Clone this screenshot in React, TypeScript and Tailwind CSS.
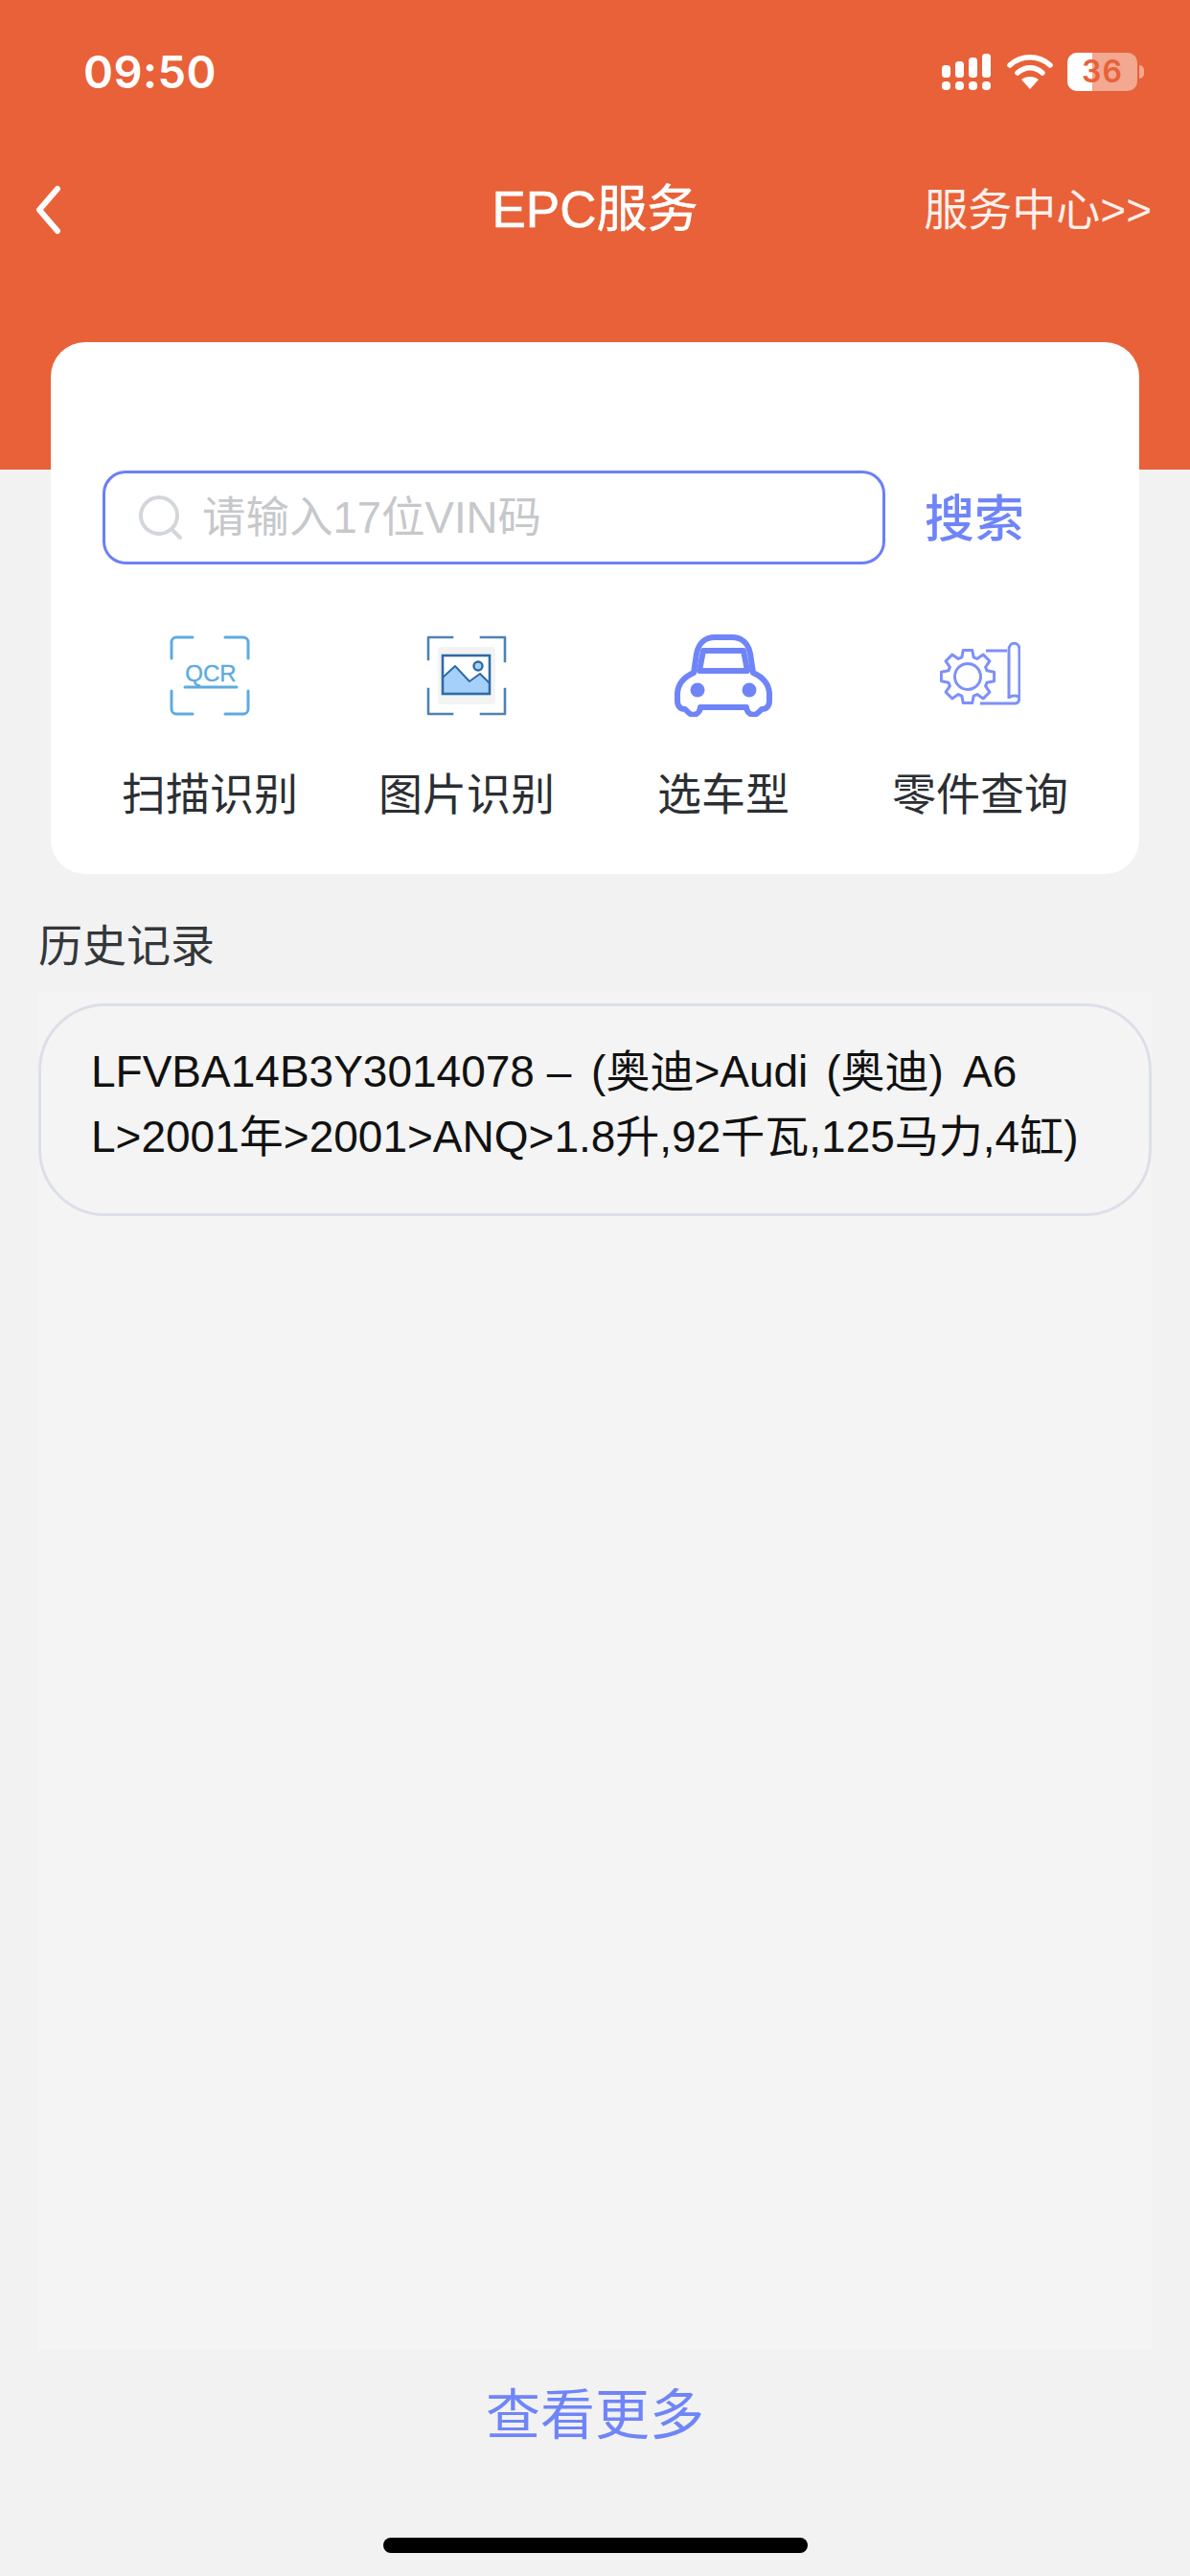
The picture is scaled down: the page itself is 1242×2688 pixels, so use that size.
import React from "react";

const FONT = "font-['Liberation_Sans','Noto_Sans_CJK_SC',sans-serif]";

const SignalIcon = () => (
  <svg width="54" height="38" viewBox="0 0 54 38" fill="#fff">
    <rect x="1" y="12" width="9" height="13" rx="3.5" />
    <rect x="15" y="8" width="9" height="17" rx="3.5" />
    <rect x="29" y="4" width="9" height="21" rx="3.5" />
    <rect x="43" y="0" width="9" height="25" rx="3.5" />
    <rect x="1" y="29" width="9" height="9" rx="4" />
    <rect x="15" y="29" width="9" height="9" rx="4" />
    <rect x="29" y="29" width="9" height="9" rx="4" />
    <rect x="43" y="29" width="9" height="9" rx="4" />
  </svg>
);

const WifiIcon = () => (
  <svg width="48" height="38" viewBox="0 0 48 38" fill="none" stroke="#fff" strokeWidth="5.5" strokeLinecap="round">
    <path d="M3 12C15 1 33 1 45 12" />
    <path d="M11 20C19 13 29 13 37 20" />
    <path d="M24 37l-9-10c5-4 13-4 18 0z" fill="#fff" stroke="none" />
  </svg>
);

const Battery = () => (
  <div className="relative flex items-center">
    <div className="relative w-[73px] h-[40px] rounded-[10px] bg-white/45 overflow-hidden">
      <div className="h-full w-[26px] bg-white" />
      <span className="absolute inset-0 flex items-center justify-center font-['Inter'] text-[32px] font-semibold text-[#e86138] tracking-[1px]">
        36
      </span>
    </div>
    <div className="w-[5px] h-[14px] ml-[2px] rounded-r-full bg-white/45" />
  </div>
);

const QcrIcon = () => (
  <svg width="84" height="84" viewBox="0 0 84 84" fill="none" stroke="#5eabe0" strokeWidth="3" strokeLinecap="round" strokeLinejoin="round">
    <path d="M2 24V7a5 5 0 0 1 5-5h17" />
    <path d="M58 2h19a5 5 0 0 1 5 5v17" />
    <path d="M2 58v19a5 5 0 0 0 5 5h17" />
    <path d="M58 82h19a5 5 0 0 0 5-5V58" />
    <path d="M16 54h54" />
    <text x="43" y="48" textAnchor="middle" fontSize="24" fontFamily="Liberation Sans" fill="#5eabe0" stroke="#5eabe0" strokeWidth="0.4">
      QCR
    </text>
  </svg>
);

const PictureIcon = () => (
  <svg width="84" height="84" viewBox="0 0 84 84" fill="none" strokeLinecap="square">
    <rect x="12" y="12" width="60" height="60" rx="3" fill="#f3f3f3" />
    <g stroke="#4f82b3" strokeWidth="2.6" strokeLinejoin="round">
      <path d="M2 25V2h25" />
      <path d="M57 2h25v25" />
      <path d="M2 56v26h25" />
      <path d="M57 82h25V56" />
    </g>
    <rect x="17" y="21" width="49" height="40" fill="#fff" />
    <path d="M17 44l13-12 15 16 11-8 10 10v11H17z" fill="#a5d0fa" stroke="#2f6ba5" strokeWidth="2" strokeLinejoin="round" />
    <rect x="17" y="21" width="49" height="40" stroke="#2f6ba5" strokeWidth="2.6" />
    <circle cx="54" cy="32" r="4.5" stroke="#2f6ba5" strokeWidth="2.4" fill="#a5d0fa" />
  </svg>
);

const CarIcon = () => (
  <svg width="102" height="86" viewBox="0 0 102 86" fill="none" stroke="#6f85f7" strokeWidth="6" strokeLinejoin="round">
    <path d="M20 40l3-20C25 9 32 3 42 3h18c10 0 17 6 19 17l3 20c9 4 16 10 17 21v8c0 6-3 9-8 9l-3 3c-5 5-12 3-13-5H27c-1 8-8 10-13 5l-3-3c-5 0-8-3-8-9v-8c1-11 8-17 17-21z" />
    <path d="M26 38l4-21h42l4 21z" />
    <circle cx="24" cy="58" r="7.5" fill="#6f85f7" stroke="none" />
    <circle cx="78" cy="58" r="7.5" fill="#6f85f7" stroke="none" />
  </svg>
);

// 齿轮外轮廓: 8 个齿
const gearPath = (cx: number, cy: number, ro: number, ri: number) => {
  const pts: string[] = [];
  for (let i = 0; i < 8; i++) {
    const a = (i * Math.PI) / 4 - Math.PI / 2;
    const p = (r: number, d: number) =>
      `${(cx + r * Math.cos(a + d)).toFixed(1)} ${(cy + r * Math.sin(a + d)).toFixed(1)}`;
    pts.push(p(ri, -0.3), p(ro, -0.17), p(ro, 0.17), p(ri, 0.3));
  }
  return `M${pts.join("L")}Z`;
};

const GearIcon = () => (
  <svg width="84" height="70" viewBox="0 0 84 70" fill="none" stroke="#7d90f8" strokeWidth="3" strokeLinejoin="round">
    <path d="M48 9h22" />
    <path d="M72 59V8c0-9 11-9 11 0v48c0 3 0 8-4 8H42" />
    <path d="M72 59c1-4 11-4 11 0" />
    <path d={gearPath(29, 36, 28, 21)} fill="#fff" />
    <circle cx="29" cy="36" r="13.5" fill="#fff" />
  </svg>
);

const tools = [
  { label: "扫描识别", icon: <QcrIcon /> },
  { label: "图片识别", icon: <PictureIcon /> },
  { label: "选车型", icon: <CarIcon /> },
  { label: "零件查询", icon: <GearIcon /> },
];

export default function App() {
  return (
    <div className={`${FONT} w-[1242px] h-[2688px] flex flex-col bg-[#f2f2f2] overflow-hidden`}>
      {/* 顶部橙色区域 */}
      <div className="h-[490px] shrink-0 bg-[#e86138] text-white">
        <div className="flex items-center justify-between pl-[87px] pr-[48px] pt-[50px] h-[100px]">
          <span className="font-['Inter'] text-[47px] leading-[50px] font-semibold tracking-[0.5px]">09:50</span>
          <div className="flex items-center gap-[15px]">
            <SignalIcon />
            <WifiIcon />
            <Battery />
          </div>
        </div>
        <div className="grid grid-cols-[1fr_auto_1fr] items-center mt-[84px] px-[40px] h-[70px]">
          <svg width="30" height="52" viewBox="0 0 30 52" fill="none" stroke="#fff" strokeWidth="6" strokeLinecap="round" strokeLinejoin="round" className="-ml-[5px]">
            <path d="M25 4L6 26l19 22" />
          </svg>
          <span className="text-[53px] leading-[70px] [-webkit-text-stroke:0.6px_#fff]">EPC服务</span>
          <span className="justify-self-end text-[46px] leading-[70px] text-white/90">服务中心&gt;&gt;</span>
        </div>
      </div>

      {/* 搜索卡片 */}
      <div className="mx-[53px] -mt-[133px] h-[555px] shrink-0 bg-white rounded-[36px] pt-[134px] pl-[54px]">
        <div className="flex items-center">
          <div className="w-[817px] h-[98px] rounded-[24px] border-[3px] border-[#6b80f6] flex items-center pl-[34px]">
            <svg width="48" height="48" viewBox="0 0 48 48" fill="none" stroke="#d3d6da" strokeWidth="4" strokeLinecap="round">
              <circle cx="22" cy="22" r="19" />
              <path d="M36 37l8 8" />
            </svg>
            <span className="ml-[19px] pt-[2px] text-[45.5px] leading-[60px] text-[#c6c8cb]">请输入17位VIN码</span>
          </div>
          <span className="ml-[41px] pt-[4px] text-[52px] leading-[60px] font-medium text-[#6f85f7]">搜索</span>
        </div>
        <div className="grid grid-cols-4 w-[1072px] -ml-[22px] mt-0">
          {tools.map((t) => (
            <div key={t.label} className="flex flex-col items-center">
              <div className="h-[112px] mt-[60px] flex items-center justify-center">{t.icon}</div>
              <span className="mt-[38px] text-[46px] leading-[60px] text-[#2b2f33]">{t.label}</span>
            </div>
          ))}
        </div>
      </div>

      {/* 历史记录 */}
      <div className="mt-[45px] mx-[40px] flex-1 flex flex-col">
        <div className="text-[46px] leading-[60px] text-[#33373a]">历史记录</div>
        <div className="h-[1417px] bg-[#f4f4f4] mt-[18px] pt-[12px]">
          <div className="h-[222px] rounded-[70px] border-[3px] border-[#dcdfe8] px-[52px] pt-[34px] text-[46px] leading-[68px] text-[#111111]">
            LFVBA14B3Y3014078 – <span className="ml-[8px]">(</span>奥迪&gt;Audi <span className="ml-[6px]">(</span>奥迪<span className="mr-[10px]">)</span> A6 L&gt;2001年&gt;2001&gt;ANQ&gt;1.8升,92千瓦,125马力,4缸)
          </div>
        </div>
        <div className="mt-[33px] text-center text-[57px] leading-[70px] text-[#6f85f7]">查看更多</div>
        <div className="mt-[93px] mx-auto w-[443px] h-[16px] rounded-full bg-black" />
      </div>
    </div>
  );
}
